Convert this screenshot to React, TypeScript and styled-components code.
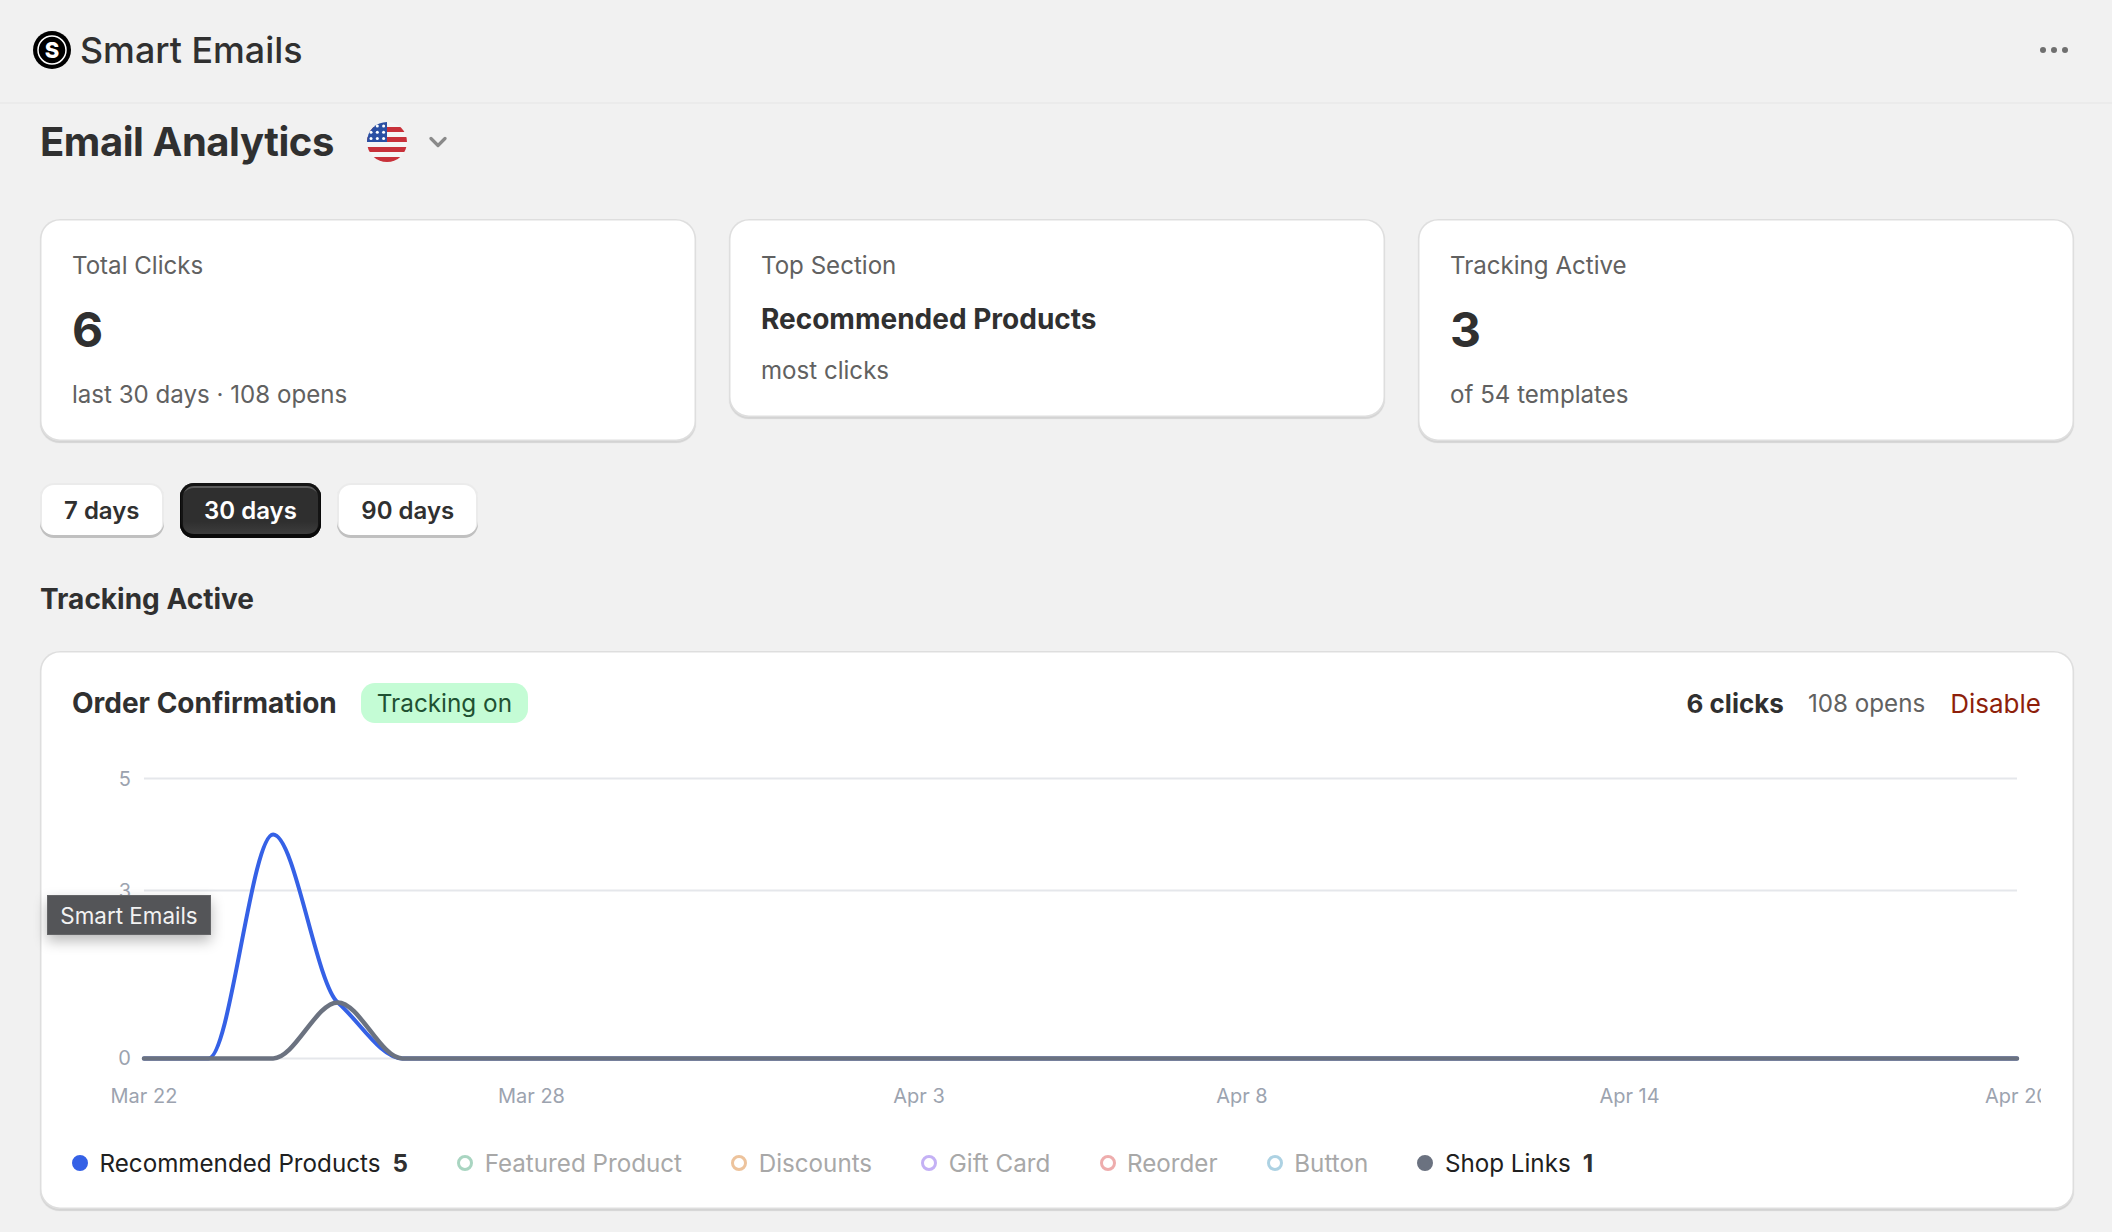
import React from 'react';
import styled, { createGlobalStyle } from 'styled-components';

const Global = createGlobalStyle`
  html, body { margin: 0; padding: 0; background: #f1f1f1; }
  body { font-family: Inter, "Noto Sans", sans-serif; color: #303030; -webkit-font-smoothing: antialiased; }
  * { box-sizing: border-box; }
`;

const Page = styled.div`
  width: 2112px;
  height: 1232px;
  overflow: hidden;
  background: #f1f1f1;
`;

const TopBar = styled.header`
  height: 104px;
  padding: 0 33px 2px;
  display: flex;
  align-items: center;
  justify-content: space-between;
  border-bottom: 2px solid #ebebeb;
`;

const Brand = styled.div`
  display: flex;
  align-items: center;
  gap: 9px;
  font-size: 35.8px;
  font-weight: 550;
  color: #303030;
`;

const MenuDots = styled.div`
  display: flex;
  gap: 5px;
  padding-right: 11px;
`;

const Dot = styled.span`
  width: 6px;
  height: 6px;
  border-radius: 50%;
  background: #6f6f6f;
`;

const Main = styled.main`
  padding: 0 38px 0 40px;
`;

const TitleRow = styled.div`
  display: flex;
  align-items: center;
  height: 76px;
`;

const Title = styled.h1`
  margin: 0 0 2px;
  font-size: 40px;
  font-weight: 700;
  letter-spacing: -0.45px;
  color: #303030;
`;

const FlagWrap = styled.div`
  display: flex;
  margin-left: 33px;
`;

const ChevronWrap = styled.div`
  display: flex;
  margin-left: 22px;
`;

const StatGrid = styled.section`
  display: grid;
  grid-template-columns: repeat(3, 1fr);
  gap: 33px;
  align-items: start;
  margin-top: 39px;
`;

const Card = styled.div`
  background: #fff;
  border-radius: 20px;
  box-shadow: 0 2px 1px rgba(0, 0, 0, 0.12), inset 0 0 0 1.5px rgba(0, 0, 0, 0.13);
`;

const StatCard = styled(Card)`
  padding: 31px 32px 30px;
  display: flex;
  flex-direction: column;
`;

const StatLabel = styled.div`
  font-size: 24.1px;
  line-height: 32px;
  color: #616161;
`;

const StatValue = styled.div`
  font-size: 48px;
  line-height: 60px;
  font-weight: 700;
  margin: 18px 0 19px;
  color: #303030;
`;

const StatHeading = styled.div`
  font-size: 28px;
  line-height: 36px;
  font-weight: 700;
  margin: 19px 0 18px;
  color: #303030;
`;

const StatNote = styled.div`
  font-size: 24.1px;
  line-height: 32px;
  color: #616161;
`;

const RangeRow = styled.div`
  display: flex;
  gap: 16.5px;
  margin-top: 42px;
`;

const RangeButton = styled.button<{ $active?: boolean }>`
  height: 55px;
  padding: 0 24px;
  border: 0;
  border-radius: 14px;
  font: 600 24px Inter, sans-serif;
  color: ${(p) => (p.$active ? '#fff' : '#303030')};
  background: ${(p) => (p.$active ? 'linear-gradient(#2f2f2f 70%, #414141)' : '#fff')};
  box-shadow: ${(p) =>
    p.$active
      ? 'inset 0 -3px 0 1px #0a0a0a, inset 0 0 0 3px #141414, inset 0 4px 0 1px rgba(255,255,255,.22)'
      : 'inset 0 -3px 0 #c0c0c0, inset 0 0 0 2px rgba(0,0,0,.08)'};
`;

const SectionTitle = styled.h2`
  margin: 43px 0 0;
  font-size: 28px;
  line-height: 36px;
  font-weight: 700;
  color: #303030;
`;

const ChartCard = styled(Card)`
  position: relative;
  margin-top: 34px;
  height: 558px;
  padding: 32px 33px 0 32px;
`;

const ChartHead = styled.div`
  display: flex;
  align-items: center;
  justify-content: space-between;
  height: 40px;
`;

const HeadLeft = styled.div`
  display: flex;
  align-items: center;
  gap: 24px;
`;

const HeadTitle = styled.div`
  font-size: 28px;
  font-weight: 700;
  color: #303030;
`;

const Badge = styled.span`
  display: inline-flex;
  align-items: center;
  height: 40px;
  padding: 0 16px;
  border-radius: 14px;
  background: #c4fcd5;
  color: #1f5132;
  font-size: 24.3px;
`;

const HeadRight = styled.div`
  display: flex;
  align-items: center;
  gap: 24px;
  font-size: 24.2px;
`;

const Clicks = styled.span`
  font-size: 26px;
  font-weight: 700;
  color: #303030;
`;

const Opens = styled.span`
  color: #616161;
`;

const Disable = styled.span`
  margin-left: 1px;
  font-size: 26px;
  color: #8e1f0b;
`;

const ChartFrame = styled.div`
  display: flex;
  margin: 24px 0 0;
`;

const Tick = styled.text`
  font-family: Inter, sans-serif;
  font-size: 20px;
  fill: #9ca3af;
`;

const Legend = styled.div`
  display: flex;
  align-items: center;
  gap: 49.2px;
  margin-top: 34px;
  height: 32px;
`;

const LegendItem = styled.div<{ $on: boolean }>`
  display: flex;
  align-items: center;
  font-size: 24.2px;
  font-weight: 400;
  color: ${(p) => (p.$on ? '#202020' : '#a8a8a8')};
`;

const LegendDot = styled.span<{ $color: string; $on: boolean }>`
  width: 16px;
  height: 16px;
  margin-right: 11.5px;
  border-radius: 50%;
  border: 3px solid ${(p) => p.$color};
  background: ${(p) => (p.$on ? p.$color : 'transparent')};
`;

const LegendCount = styled.span`
  margin-left: 12px;
  font-weight: 700;
  color: #303030;
`;

const Tooltip = styled.div`
  position: absolute;
  left: 7px;
  top: 244px;
  width: 164px;
  height: 40px;
  display: flex;
  align-items: center;
  justify-content: center;
  font-size: 22.4px;
  color: #f2f2f2;
  background: #545558;
  border: 1.5px solid #646567;
  box-shadow: 0 6px 14px rgba(0, 0, 0, 0.28);
`;

function monotonePath(pts: [number, number][]): string {
  const n = pts.length;
  const s: number[] = [];
  for (let i = 0; i < n - 1; i++) s.push((pts[i + 1][1] - pts[i][1]) / (pts[i + 1][0] - pts[i][0]));
  const m: number[] = new Array(n).fill(0);
  for (let i = 1; i < n - 1; i++) {
    if (s[i - 1] * s[i] <= 0) m[i] = 0;
    else {
      const sign = s[i] > 0 ? 1 : -1;
      m[i] = sign * Math.min(Math.abs(s[i - 1]), Math.abs(s[i]), 0.5 * Math.abs((s[i - 1] + s[i]) / 2) * 2);
    }
  }
  let d = `M${pts[0][0]},${pts[0][1]}`;
  for (let i = 0; i < n - 1; i++) {
    const h = (pts[i + 1][0] - pts[i][0]) / 3;
    d += `C${pts[i][0] + h},${pts[i][1] + m[i] * h} ${pts[i + 1][0] - h},${pts[i + 1][1] - m[i + 1] * h} ${pts[i + 1][0]},${pts[i + 1][1]}`;
  }
  return d;
}

// Chart space is page coordinates offset by the svg's origin (x 72, y 747).
const X0 = 72;
const Y0 = 747;
const STEP = 64.62;
const xAt = (i: number) => 144 + i * STEP - X0;
const yAt = (v: number) => 1058.5 - v * 56 - Y0;
const series = (vals: Record<number, number>) =>
  monotonePath(Array.from({ length: 30 }, (_, i) => [xAt(i), yAt(vals[i] ?? 0)] as [number, number]));

const xTicks = [
  { i: 0, t: 'Mar 22' },
  { i: 6, t: 'Mar 28' },
  { i: 12, t: 'Apr 3' },
  { i: 17, t: 'Apr 8' },
  { i: 23, t: 'Apr 14' },
  { i: 29, t: 'Apr 20' },
];

const legend = [
  { name: 'Recommended Products', color: '#3561e6', count: 5 },
  { name: 'Featured Product', color: '#a9d5c1' },
  { name: 'Discounts', color: '#edc39c' },
  { name: 'Gift Card', color: '#c4b1f5' },
  { name: 'Reorder', color: '#eeadad' },
  { name: 'Button', color: '#add2e3' },
  { name: 'Shop Links', color: '#6b7280', count: 1 },
];

function Logo() {
  return (
    <svg width="38" height="38" viewBox="0 0 38 38">
      <circle cx="19" cy="19" r="19" fill="#000" />
      <circle cx="19" cy="19" r="14" fill="none" stroke="#fff" strokeWidth="1.5" />
      <text x="19" y="27" textAnchor="middle" fontFamily="Inter, sans-serif" fontWeight="800" fontSize="22" fill="#fff">
        S
      </text>
    </svg>
  );
}

function Flag() {
  const stars: React.ReactNode[] = [];
  for (let r = 0; r < 3; r++)
    for (let c = 0; c < 3; c++)
      stars.push(<circle key={`${r}-${c}`} cx={4 + c * 6.3} cy={4 + r * 6.3} r="1.5" fill="#fff" />);
  return (
    <svg width="40" height="40" viewBox="0 0 40 40">
      <defs>
        <clipPath id="flagClip">
          <circle cx="20" cy="20" r="20" />
        </clipPath>
      </defs>
      <g clipPath="url(#flagClip)">
        <rect width="40" height="40" fill="#f5f5f5" />
        {[5, 15, 25, 35].map((y) => (
          <rect key={y} x="0" y={y} width="40" height="5" fill="#c8313a" />
        ))}
        <rect width="20" height="20" fill="#2a4fa3" />
        {stars}
      </g>
    </svg>
  );
}

export default function App() {
  return (
    <Page>
      <Global />
      <TopBar>
        <Brand>
          <Logo />
          Smart Emails
        </Brand>
        <MenuDots>
          <Dot />
          <Dot />
          <Dot />
        </MenuDots>
      </TopBar>
      <Main>
        <TitleRow>
          <Title>Email Analytics</Title>
          <FlagWrap>
            <Flag />
          </FlagWrap>
          <ChevronWrap>
            <svg width="18" height="12" viewBox="0 0 18 12" fill="none" stroke="#8a8a8a" strokeWidth="3.2" strokeLinecap="round" strokeLinejoin="round">
              <path d="M2 2.5 L9 9.5 L16 2.5" />
            </svg>
          </ChevronWrap>
        </TitleRow>

        <StatGrid>
          <StatCard>
            <StatLabel>Total Clicks</StatLabel>
            <StatValue>6</StatValue>
            <StatNote>last 30 days · 108 opens</StatNote>
          </StatCard>
          <StatCard>
            <StatLabel>Top Section</StatLabel>
            <StatHeading>Recommended Products</StatHeading>
            <StatNote>most clicks</StatNote>
          </StatCard>
          <StatCard>
            <StatLabel>Tracking Active</StatLabel>
            <StatValue>3</StatValue>
            <StatNote>of 54 templates</StatNote>
          </StatCard>
        </StatGrid>

        <RangeRow>
          <RangeButton>7 days</RangeButton>
          <RangeButton $active>30 days</RangeButton>
          <RangeButton>90 days</RangeButton>
        </RangeRow>

        <SectionTitle>Tracking Active</SectionTitle>

        <ChartCard>
          <ChartHead>
            <HeadLeft>
              <HeadTitle>Order Confirmation</HeadTitle>
              <Badge>Tracking on</Badge>
            </HeadLeft>
            <HeadRight>
              <Clicks>6 clicks</Clicks>
              <Opens>108 opens</Opens>
              <Disable>Disable</Disable>
            </HeadRight>
          </ChartHead>
          <ChartFrame>
            <svg width="1970" height="366" viewBox="0 0 1970 366">
              {[5, 3, 0].map((v) => (
                <g key={v}>
                  <line x1={xAt(0)} x2={xAt(29)} y1={yAt(v)} y2={yAt(v)} stroke="#e5e7eb" strokeWidth="2" />
                  <Tick x={59} y={yAt(v) + 7} textAnchor="end">
                    {v}
                  </Tick>
                </g>
              ))}
              <path d={series({ 2: 4, 3: 1 })} fill="none" stroke="#3561e6" strokeWidth="4" strokeLinecap="round" />
              <path d={series({ 3: 1 })} fill="none" stroke="#6b7280" strokeWidth="4.5" strokeLinecap="round" />
              {xTicks.map((k) => (
                <Tick key={k.t} x={xAt(k.i)} y={356} textAnchor="middle">
                  {k.t}
                </Tick>
              ))}
            </svg>
          </ChartFrame>
          <Legend>
            {legend.map((l) => {
              const on = l.count !== undefined;
              return (
                <LegendItem key={l.name} $on={on}>
                  <LegendDot $color={l.color} $on={on} />
                  {l.name}
                  {on && <LegendCount>{l.count}</LegendCount>}
                </LegendItem>
              );
            })}
          </Legend>
          <Tooltip>Smart Emails</Tooltip>
        </ChartCard>
      </Main>
    </Page>
  );
}
